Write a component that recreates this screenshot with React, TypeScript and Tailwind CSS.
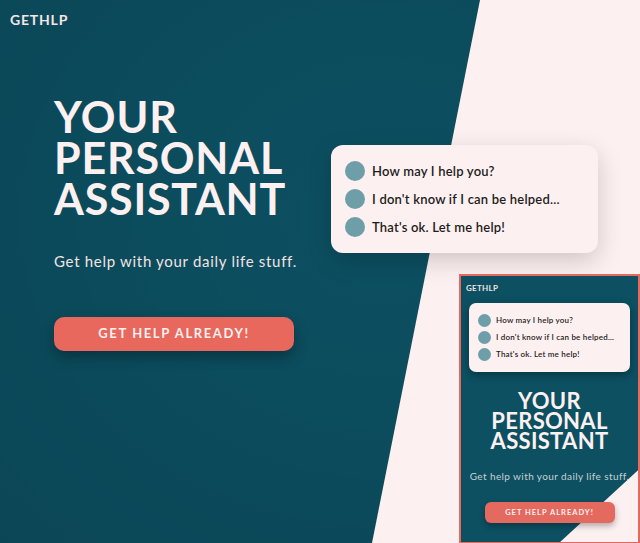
import React from "react";

const lines = ["How may I help you?", "I don't know if I can be helped...", "That's ok. Let me help!"];

const ChatCard = ({ small = false }: { small?: boolean }) => {
  return (
    <div
      className={
        small
          ? "bg-[#fdf0f0] rounded-[7px] shadow-[0_3px_8px_rgba(0,0,0,0.35)] px-[9px] py-[11px] flex flex-col gap-[4px]"
          : "bg-[#fdf0f0] rounded-[12px] shadow-[0_8px_24px_rgba(0,0,0,0.18)] pl-[14px] pr-4 py-[16px] flex flex-col gap-[8px]"
      }
    >
      {lines.map((t, i) => (
        <div key={i} className={small ? "flex items-center gap-[5px]" : "flex items-center gap-[7px]"}>
          <span className={small ? "w-[13px] h-[13px] rounded-full bg-[#6e9ea8]" : "w-[20px] h-[20px] rounded-full bg-[#6e9ea8]"} />
          <span
            className={
              small
                ? "text-[8px] leading-[13px] font-semibold tracking-[0.2px] text-[#1d1d1d]"
                : "text-[13px] leading-[20px] font-semibold tracking-[0.2px] text-[#1d1d1d]"
            }
          >
            {t}
          </span>
        </div>
      ))}
    </div>
  );
};

const MiniPreview = () => {
  return (
    <div className="relative w-[181px] h-[270px] border-2 border-[#e46a60] bg-[#0c5062] overflow-hidden">
      {/* pink corner */}
      <div className="absolute inset-0 bg-[#fdf0f0] [clip-path:polygon(100%_73%,100%_100%,56%_100%)]" />
      <div className="relative flex flex-col">
        <div className="px-[5px] pt-[6px] text-[8px] leading-[12px] font-bold tracking-[0.3px] text-[#f3e3e3]">GETHLP</div>
        <div className="mx-[8px] mt-[9px]">
          <ChatCard small />
        </div>
        <h2 className="mt-[19px] text-center text-[22px] leading-[20px] font-bold tracking-[0.3px] text-[#fdf0f0]">
          YOUR
          <br />
          PERSONAL
          <br />
          ASSISTANT
        </h2>
        <p className="mt-[18px] text-center text-[10px] tracking-[0.4px] text-[#c9d0d3]">
          Get help with your daily life stuff.
        </p>
        <div className="mt-[18px] mx-auto w-[130px] h-[21px] rounded-[6px] bg-[#e46a60] shadow-[0_3px_6px_rgba(0,0,0,0.3)] flex items-center justify-center text-[7.5px] font-bold tracking-[1px] text-[#fdf0f0]">
          GET HELP ALREADY!
        </div>
      </div>
    </div>
  );
};

export default function App() {
  return (
    <div className="relative w-full h-[543px] overflow-hidden bg-[#0c5062] font-['Lato','Open_Sans',sans-serif]">
      {/* soft shading on the teal side */}
      <div className="absolute inset-0 bg-[radial-gradient(ellipse_at_60%_40%,rgba(255,255,255,0.0),rgba(0,0,0,0.12))]" />
      {/* pink diagonal side */}
      <div className="absolute inset-0 bg-[#fdf0f0] [clip-path:polygon(480px_0,100%_0,100%_100%,372px_100%)]" />

      <div className="relative flex flex-col">
        <div className="pl-[10px] pt-[10px] text-[14px] leading-[19px] font-bold tracking-[0.8px] text-[#f6e6e6]">GETHLP</div>
        <div className="flex">
          <div className="w-[331px] pl-[54px] pt-[67px]">
            <h1 className="text-[43px] leading-[41px] font-bold tracking-[0.8px] text-[#fdf0f0]">
              YOUR
              <br />
              PERSONAL
              <br />
              ASSISTANT
            </h1>
            <p className="mt-[31px] text-[15px] tracking-[0.7px] text-[#f3e3e3]">Get help with your daily life stuff.</p>
            <button className="mt-[44px] w-[240px] h-[34px] rounded-[10px] bg-[#e8685e] shadow-[0_6px_14px_rgba(0,0,0,0.3)] text-[13px] font-bold tracking-[1.6px] text-[#fdf0f0]">
              GET HELP ALREADY!
            </button>
          </div>
          <div className="flex flex-col pt-[116px]">
            <div className="w-[267px]">
              <ChatCard />
            </div>
            <div className="ml-[128px] mt-[21px]">
              <MiniPreview />
            </div>
          </div>
        </div>
      </div>
    </div>
  );
}
